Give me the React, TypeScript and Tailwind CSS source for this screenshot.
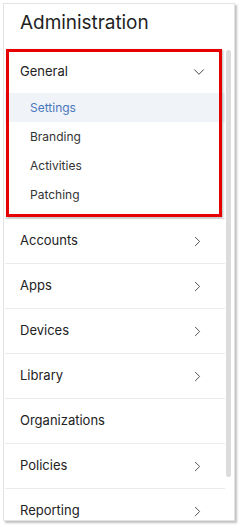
import { ChevronDown, ChevronRight } from 'lucide-react';

const subItems = ['Settings', 'Branding', 'Activities', 'Patching'];

const sections = [
  { label: 'Accounts', hasChildren: true },
  { label: 'Apps', hasChildren: true },
  { label: 'Devices', hasChildren: true },
  { label: 'Library', hasChildren: true },
  { label: 'Organizations', hasChildren: false },
  { label: 'Policies', hasChildren: true },
  { label: 'Reporting', hasChildren: true },
];

export default function App() {
  return (
    <div className="h-[526px] w-[243px] overflow-hidden bg-white pl-[3px] pt-[3px] font-['Inter',sans-serif] text-[#222]">
      <div className="relative flex h-[518px] w-[232px] flex-col overflow-hidden border border-[#e3e3e3] bg-white shadow-[2px_2px_2px_rgba(0,0,0,0.25)]">
        <div className="flex h-[46px] shrink-0 items-center pl-4 pb-[10px]">
          <h1 className="text-[19px] font-normal leading-none tracking-[-0.05px] text-[#1f1f1f]">Administration</h1>
        </div>

        <div className="flex min-h-0 flex-1">
          <nav className="min-w-0 flex-1 pl-px">
            <div className="border-b border-[#ebebeb] pb-[9px]">
              <div className="flex h-[43px] items-center justify-between pl-[15px] pr-[17px]">
                <span className="text-[13px]">General</span>
                <ChevronDown size={18} strokeWidth={1.3} className="text-[#444]" />
              </div>
              {subItems.map((item, i) => (
                <div
                  key={item}
                  className={`flex h-[29px] items-center pl-[25px] text-[12px] ${i === 0 ? 'bg-[#f0f3f8] text-[#4a78bd]' : 'text-[#333]'}`}
                >
                  {item}
                </div>
              ))}
            </div>

            {sections.map((section) => (
              <div key={section.label} className="flex h-[45px] items-center justify-between border-b border-[#ebebeb] pl-[15px] pr-[19px]">
                <span className="text-[13px]">{section.label}</span>
                {section.hasChildren && <ChevronRight size={17} strokeWidth={1.3} className="text-[#444]" />}
              </div>
            ))}
          </nav>

          <div className="w-[9px] shrink-0 pl-px pr-[3px]">
            <div className="h-[427px] rounded-[3px] bg-[#dcdcdc]" />
          </div>
        </div>

        <div className="pointer-events-none absolute left-[2px] top-[45px] h-[168px] w-[216px] border-[3px] border-[#e60000] shadow-[1px_1px_2px_rgba(0,0,0,0.3)]" />
      </div>
    </div>
  );
}
